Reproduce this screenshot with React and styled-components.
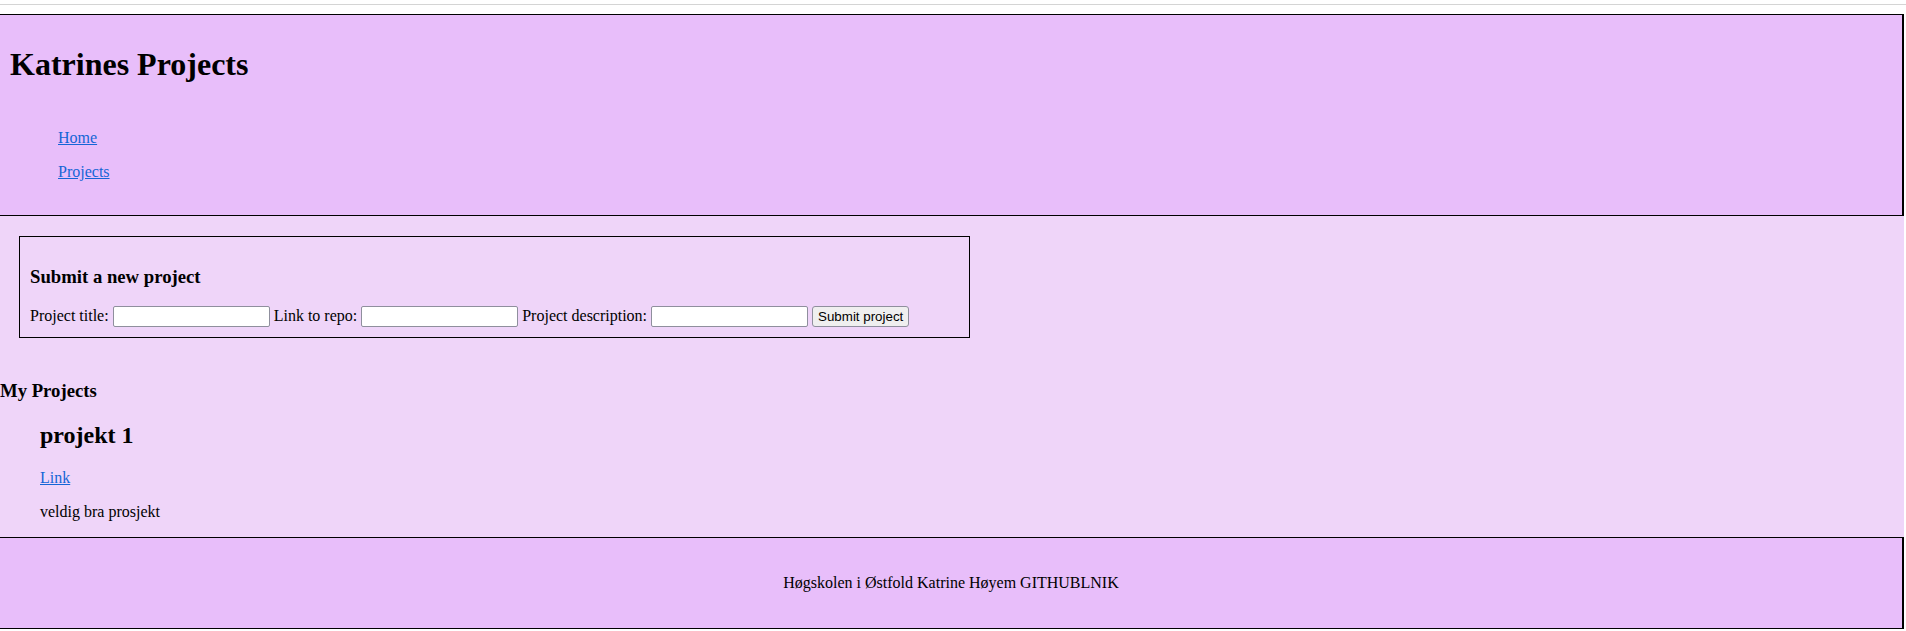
import React from 'react';
import styled, { createGlobalStyle } from 'styled-components';

const GlobalStyle = createGlobalStyle`
  html {
    background: #ffffff;
  }
  body {
    margin: 0;
    font-family: "Liberation Serif", "Times New Roman", serif;
    font-size: 16px;
    color: #000;
  }
`;

const TopBar = styled.div`
  height: 9px;
  margin-top: 4px;
  border-top: 1px solid #d4d4d4;
  background: #ffffff;
`;

const Page = styled.div`
  width: 1904px;
  background: #efd5f9;
  display: flow-root;
`;

const Header = styled.header`
  background: #e8befa;
  border: 1px solid #000;
  border-left: none;
  border-right-width: 2px;
  padding: 10px;
`;

const Title = styled.h1`
  font-size: 32px;
  margin: 21.44px 0;
`;

const Nav = styled.nav`
  display: flow-root;
`;

const NavList = styled.ul`
  list-style: none;
  margin: 16px 0;
  padding-left: 48px;
`;

const NavItem = styled.li`
  padding: 8px 0;
`;

const TextLink = styled.a`
  color: #1565d6;
  text-decoration: underline;
`;

const SubmitBox = styled.section`
  box-sizing: border-box;
  width: 951px;
  margin: 20px 19px 23px;
  padding: 10px;
  border: 1px solid #000;
`;

const SubTitle = styled.h3`
  font-size: 18.72px;
  margin: 18.72px 0;
`;

const Form = styled.form`
  margin: 0;
`;

const TextInput = styled.input`
  box-sizing: border-box;
  width: 157px;
  height: 21px;
  padding: 1px 2px;
  border: 1px solid #8f8f9d;
  border-radius: 2px;
  background: #fff;
  font-family: "Liberation Sans", Arial, sans-serif;
  font-size: 13.33px;
`;

const SubmitButton = styled.button`
  height: 21px;
  padding: 1px 5px;
  border: 1px solid #8f8f9d;
  border-radius: 3px;
  background: #efefef;
  color: #000;
  font-family: "Liberation Sans", Arial, sans-serif;
  font-size: 13.33px;
`;

const ProjectsSection = styled.section`
  display: flow-root;
`;

const ProjectCard = styled.article`
  padding-left: 40px;
`;

const ProjectName = styled.h2`
  font-size: 24px;
  margin: 19.92px 0;
`;

const Paragraph = styled.p`
  margin: 16px 0;
`;

const Footer = styled.footer`
  background: #e8befa;
  border: 1px solid #000;
  border-left: none;
  border-right-width: 2px;
  padding: 20px;
  text-align: center;
`;

const projects = [
  { name: 'projekt 1', link: '#', description: 'veldig bra prosjekt' },
];

export default function App() {
  return (
    <>
      <GlobalStyle />
      <TopBar />
      <Page>
        <Header>
          <Title>Katrines Projects</Title>
          <Nav>
            <NavList>
              <NavItem>
                <TextLink href="#">Home</TextLink>
              </NavItem>
              <NavItem>
                <TextLink href="#">Projects</TextLink>
              </NavItem>
            </NavList>
          </Nav>
        </Header>

        <SubmitBox>
          <SubTitle>Submit a new project</SubTitle>
          <Form onSubmit={(e) => e.preventDefault()}>
            <label>
              Project title: <TextInput type="text" />
            </label>{' '}
            <label>
              Link to repo: <TextInput type="text" />
            </label>{' '}
            <label>
              Project description: <TextInput type="text" />
            </label>{' '}
            <SubmitButton type="submit">Submit project</SubmitButton>
          </Form>
        </SubmitBox>

        <ProjectsSection>
          <SubTitle>My Projects</SubTitle>
          {projects.map((p) => (
            <ProjectCard key={p.name}>
              <ProjectName>{p.name}</ProjectName>
              <Paragraph>
                <TextLink href={p.link}>Link</TextLink>
              </Paragraph>
              <Paragraph>{p.description}</Paragraph>
            </ProjectCard>
          ))}
        </ProjectsSection>

        <Footer>
          <Paragraph>Høgskolen i Østfold Katrine Høyem GITHUBLNIK</Paragraph>
        </Footer>
      </Page>
    </>
  );
}
